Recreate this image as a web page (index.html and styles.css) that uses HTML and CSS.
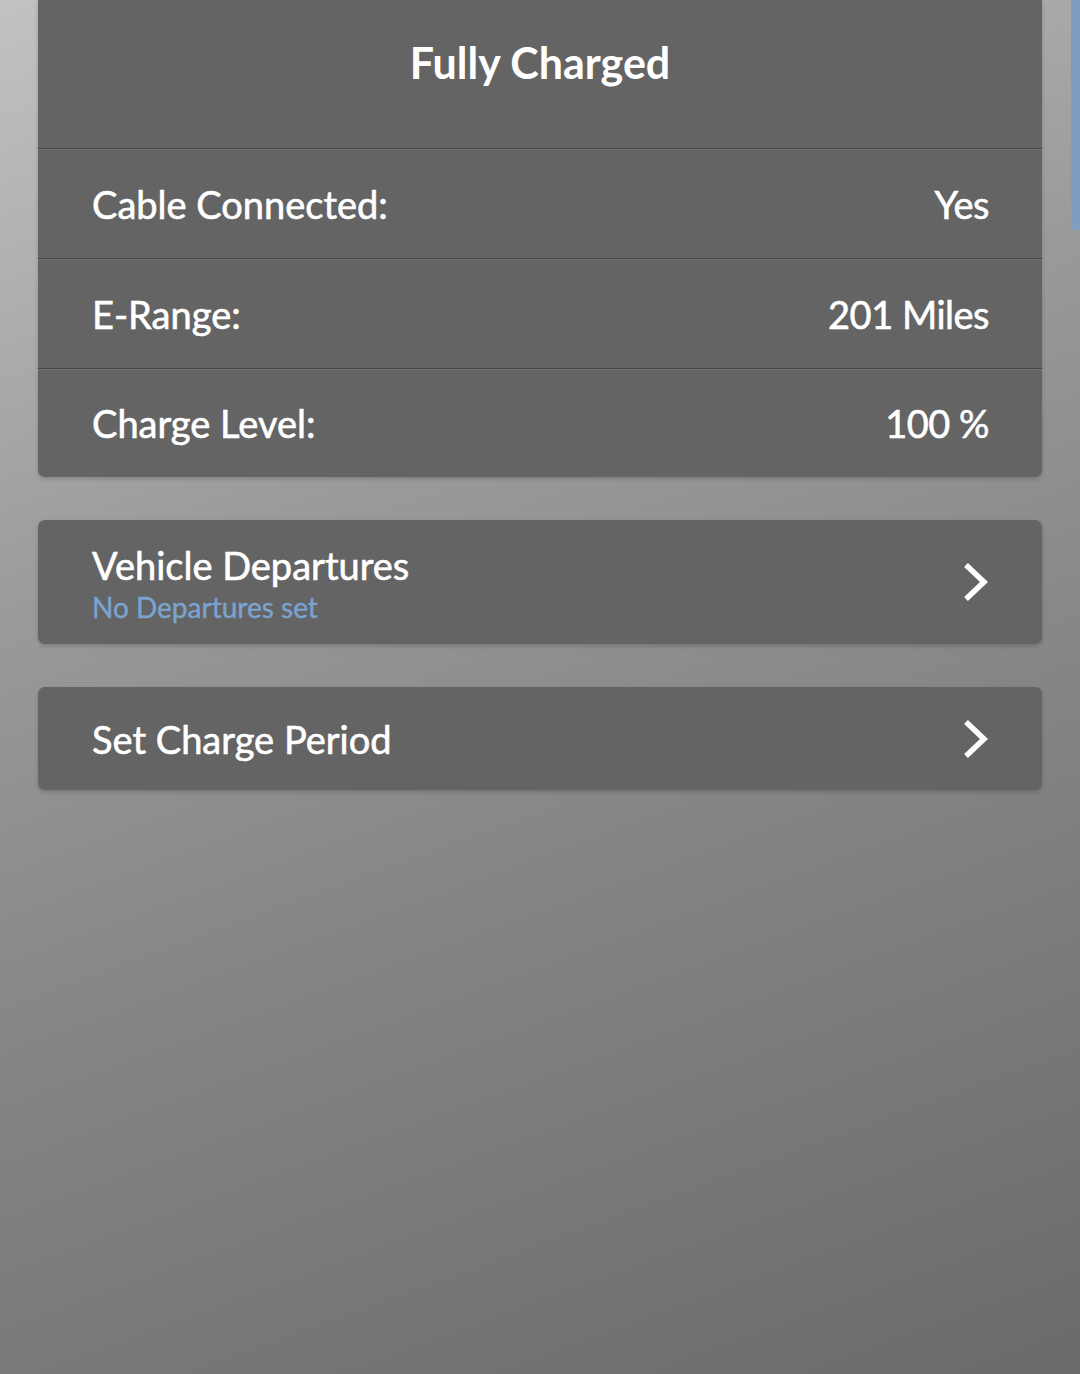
FILE: index.html
```html
<!DOCTYPE html>
<html>
<head>
<meta charset="utf-8">
<link rel="stylesheet" href="styles.css">
</head>
<body>
<div class="page">
  <div class="card status">
    <div class="status-head">Fully Charged</div>
    <div class="row"><span class="label">Cable Connected:</span><span class="value">Yes</span></div>
    <div class="row"><span class="label">E-Range:</span><span class="value">201 Miles</span></div>
    <div class="row"><span class="label">Charge Level:</span><span class="value">100 %</span></div>
  </div>
  <div class="card nav nav-tall">
    <div class="nav-text">
      <div class="nav-title">Vehicle Departures</div>
      <div class="nav-sub">No Departures set</div>
    </div>
    <svg class="chev" width="28" height="40" viewBox="0 0 28 40"><polyline points="4,3 22,20 4,37" fill="none" stroke="#fff" stroke-width="5.5" stroke-linejoin="miter"/></svg>
  </div>
  <div class="card nav nav-short">
    <div class="nav-text">
      <div class="nav-title">Set Charge Period</div>
    </div>
    <svg class="chev" width="28" height="40" viewBox="0 0 28 40"><polyline points="4,3 22,20 4,37" fill="none" stroke="#fff" stroke-width="5.5" stroke-linejoin="miter"/></svg>
  </div>
</div>
<div class="scrollbar"></div>
</body>
</html>
```
FILE: styles.css
```css
html, body {
  margin: 0;
  padding: 0;
}
body {
  width: 1080px;
  height: 1374px;
  overflow: hidden;
  background: linear-gradient(160deg, #c2c2c2 0%, #9a9a9a 35%, #858585 60%, #6a6a6a 100%);
  font-family: "Lato", "Noto Sans", sans-serif;
  color: #fff;
  position: relative;
}
.page {
  padding: 0 38px;
  display: flex;
  flex-direction: column;
  gap: 43px;
}
.card {
  background: #646464;
  border-radius: 7px;
  box-shadow: 0 2px 4px rgba(0,0,0,0.18);
}
.status {
  border-radius: 0 0 7px 7px;
}
.status-head {
  height: 148px;
  display: flex;
  align-items: center;
  justify-content: center;
  font-weight: 700;
  font-size: 43px;
  letter-spacing: 0;
  padding-bottom: 24px;
  box-sizing: border-box;
}
.row {
  height: 110px;
  box-sizing: border-box;
  border-top: 1px solid #464646;
  box-shadow: inset 0 1px 0 #727272;
  display: flex;
  align-items: center;
  justify-content: space-between;
  padding: 0 53px 0 54px;
  font-size: 38px;
  -webkit-text-stroke: 0.6px #fff;
}
.value {
  letter-spacing: -0.5px;
}
.row:last-child {
  height: 109px;
}
.nav {
  display: flex;
  align-items: center;
  justify-content: space-between;
  padding: 0 52px 0 54px;
}
.nav-tall {
  height: 124px;
}
.nav-short {
  height: 103px;
}
.nav-title {
  font-size: 38px;
  line-height: 44px;
  -webkit-text-stroke: 0.6px #fff;
}
.nav-tall .nav-title {
  margin-top: -4px;
}
.nav-sub {
  font-size: 28px;
  line-height: 34px;
  margin-top: 3px;
  margin-bottom: -6px;
  color: #7ba3d0;
  -webkit-text-stroke: 0.4px #7ba3d0;
}
.chev {
  display: block;
}
.scrollbar {
  position: absolute;
  top: 0;
  right: 0;
  width: 9px;
  height: 230px;
  background: #7f9ebf;
}
```
